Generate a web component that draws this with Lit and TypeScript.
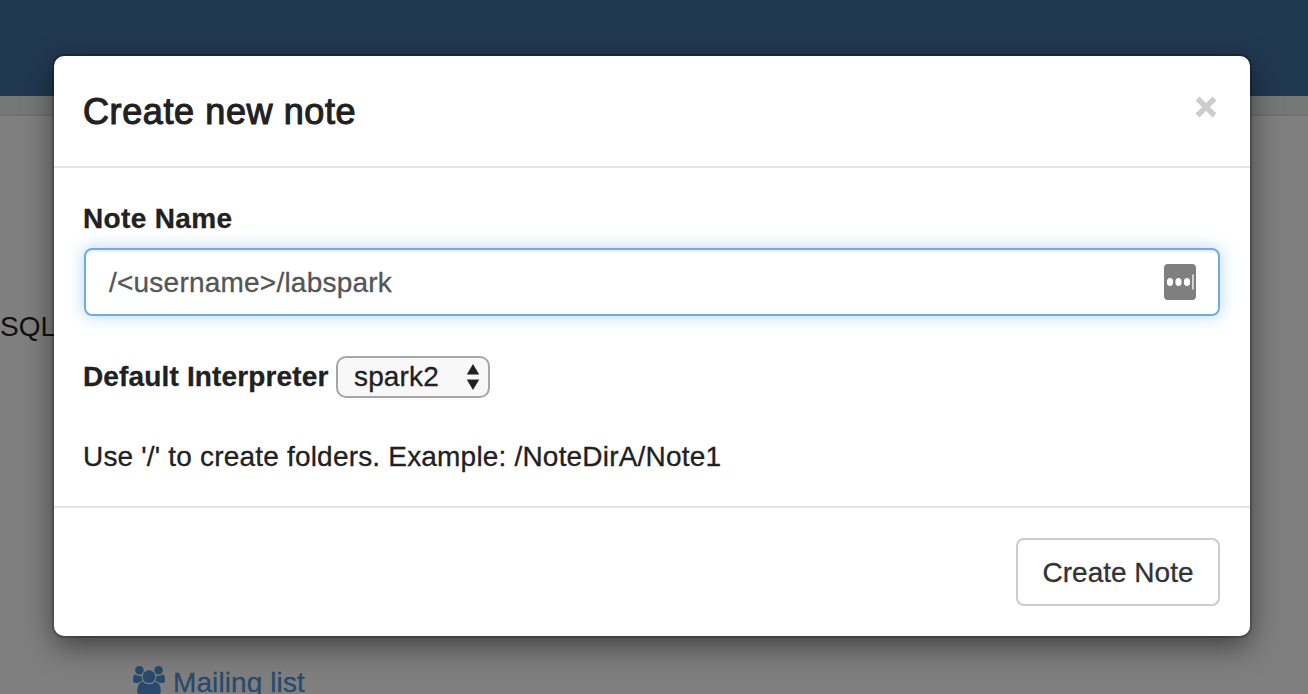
import { LitElement, html, css, svg } from "lit";
import { customElement, property } from "lit/decorators.js";

const usersSide = svg`
  <path d="M593 640q-162 -5 -265 -128h-134q-82 0 -138 40.5t-56 118.5q0 353 124 353q6 0 43.5 -21t97.5 -42.5t119 -21.5q67 0 133 23q-5 -37 -5 -66q0 -159 93 -288z"/>
  <circle cx="384" cy="1280" r="256"/>`;

@customElement("note-dialog")
export class NoteDialog extends LitElement {
  @property() noteName = "/<username>/labspark";
  @property() interpreter = "spark2";

  static styles = css`
    :host {
      display: block;
      box-sizing: border-box;
      width: 1196px;
      height: 580px;
      border-radius: 10px;
      background: #fff;
      box-shadow: 0 0 0 2px rgba(0, 0, 0, 0.2), 0 10px 30px rgba(0, 0, 0, 0.5);
      font: 28px/40px "Liberation Sans", Arial, sans-serif;
      color: #212121;
      -webkit-text-stroke: 0.3px currentColor;
    }
    .header {
      box-sizing: border-box;
      height: 112px;
      padding: 30px 33px 0 29px;
      border-bottom: 2px solid #e5e5e5;
      display: flex;
      justify-content: space-between;
    }
    h4 {
      margin: 0;
      font-size: 36px;
      line-height: 52px;
      font-weight: 400;
      letter-spacing: 0.6px;
      -webkit-text-stroke: 1.1px #212121;
    }
    .close {
      width: 22px;
      height: 22px;
      margin-top: 10px;
      fill: none;
      stroke: #ccc;
      stroke-width: 5.4;
    }
    .body {
      box-sizing: border-box;
      height: 338px;
      padding: 31px 30px 0 29px;
    }
    .label {
      font-weight: 700;
      letter-spacing: 0.15px;
    }
    .name {
      letter-spacing: 0.35px;
    }
    .field {
      box-sizing: border-box;
      height: 68px;
      margin: 9px 0 0 1px;
      padding: 0 22px 0 23px;
      border: 2px solid #73aae2;
      border-radius: 8px;
      box-shadow: inset 0 2px 2px rgba(0, 0, 0, 0.075), 0 0 16px rgba(102, 175, 233, 0.5);
      display: flex;
      align-items: center;
      justify-content: space-between;
      color: #555;
    }
    .value {
      padding-top: 2px;
      letter-spacing: 0.22px;
    }
    .key {
      width: 32px;
      height: 36px;
    }
    .row {
      display: flex;
      align-items: center;
      margin-top: 40px;
    }
    .row .label {
      width: 253px;
    }
    .select {
      box-sizing: border-box;
      width: 154px;
      height: 42px;
      padding: 0 8px 0 16px;
      border: 2px solid #a6a6a6;
      border-radius: 10px;
      background: #f8f8f8;
      display: flex;
      align-items: center;
      justify-content: space-between;
      letter-spacing: 0.15px;
    }
    .arrows {
      width: 14px;
      height: 26px;
      fill: #212121;
    }
    .hint {
      margin-top: 39px;
      letter-spacing: 0.19px;
    }
    .footer {
      box-sizing: border-box;
      height: 130px;
      padding: 30px;
      border-top: 2px solid #e5e5e5;
      display: flex;
      justify-content: flex-end;
    }
    button {
      box-sizing: border-box;
      width: 204px;
      height: 68px;
      padding: 2px 0 0;
      border: 2px solid #ccc;
      border-radius: 8px;
      background: #fff;
      color: #333;
      font: inherit;
      -webkit-text-stroke: inherit;
    }
  `;

  render() {
    return html`
      <div class="header">
        <h4>Create new note</h4>
        <svg class="close" viewBox="0 0 22 22"><path d="M2.5 2.5L19.5 19.5M19.5 2.5L2.5 19.5" /></svg>
      </div>
      <div class="body">
        <div class="label name">Note Name</div>
        <div class="field">
          <span class="value">${this.noteName}</span>
          <svg class="key" viewBox="0 0 32 36">
            <rect width="32" height="36" rx="4" fill="#7f7f7f" />
            <g fill="#fff">
              <ellipse cx="6" cy="18" rx="3.1" ry="4" />
              <ellipse cx="14.5" cy="18" rx="3.1" ry="4" />
              <ellipse cx="23" cy="18" rx="3.1" ry="4" />
              <rect x="28.3" y="10.5" width="1.3" height="15" />
            </g>
          </svg>
        </div>
        <div class="row">
          <span class="label">Default Interpreter</span>
          <div class="select">
            <span>${this.interpreter}</span>
            <svg class="arrows" viewBox="0 0 14 26"><path d="M7 0L13.2 10.5H.8ZM7 26L13.2 15.5H.8Z" /></svg>
          </div>
        </div>
        <div class="hint">Use '/' to create folders. Example: /NoteDirA/Note1</div>
      </div>
      <div class="footer"><button>Create Note</button></div>
    `;
  }
}

@customElement("app-root")
export class AppRoot extends LitElement {
  static styles = css`
    :host {
      display: block;
      position: relative;
      width: 1308px;
      height: 694px;
      overflow: hidden;
      background: #7f7f7f;
      font: 28px/40px "Liberation Sans", Arial, sans-serif;
    }
    .nav {
      height: 96px;
      background: #213851;
    }
    .strip {
      box-sizing: border-box;
      height: 20px;
      background: #757877;
      border-bottom: 2px solid #707171;
    }
    .text {
      padding-top: 191px;
      color: #101010;
    }
    .link {
      display: flex;
      gap: 8px;
      margin-top: 316px;
      padding-left: 133px;
      color: #294a6c;
      letter-spacing: 0.1px;
      -webkit-text-stroke: 0.3px currentColor;
    }
    .users {
      width: 32px;
      height: 32px;
      margin-top: 3px;
      fill: currentColor;
    }
    note-dialog {
      position: absolute;
      left: 54px;
      top: 56px;
    }
  `;

  render() {
    return html`
      <div class="nav"></div>
      <div class="strip"></div>
      <div class="text">SQL</div>
      <div class="link">
        <svg class="users" viewBox="0 0 1920 1920">
          <g transform="translate(0 1536) scale(1 -1)">
            <g>${usersSide}</g>
            <g transform="translate(1920 0) scale(-1 1)">${usersSide}</g>
            <circle cx="960" cy="896" r="384" />
            <path d="M1664 3q0 -121 -73 -190t-194 -69h-874q-121 0 -194 69t-73 190q0 53 3.5 103.5t14 109t26.5 108.5t43 97.5t62 81t85.5 53.5t111.5 20q10 0 43 -21.5t73 -48t107 -48t135 -21.5t135 21.5t107 48t73 48t43 21.5q61 0 111.5 -20t85.5 -53.5t62 -81t43 -97.5t26.5 -108.5t14 -109t3.5 -103.5z" />
          </g>
        </svg>
        <span>Mailing list</span>
      </div>
      <note-dialog></note-dialog>
    `;
  }
}
